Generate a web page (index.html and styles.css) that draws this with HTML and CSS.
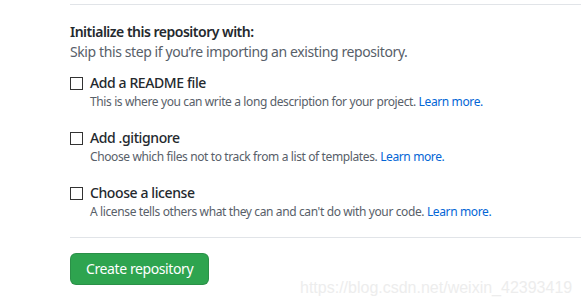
FILE: index.html
```html
<!DOCTYPE html>
<html lang="en">
<head>
    <meta charset="UTF-8">
    <meta name="viewport" content="width=device-width, initial-scale=1.0">
    <title>Create a new repository</title>
    <link rel="stylesheet" href="styles.css">
</head>
<body>
    <form class="repo-form">
        <div class="init-section">
            <h3>Initialize this repository with:</h3>
            <p class="note">Skip this step if you’re importing an existing repository.</p>

            <div class="option">
                <label class="option-label">
                    <input type="checkbox" name="readme"> Add a README file
                </label>
                <p class="option-desc">This is where you can write a long description for your project. <a href="#">Learn more.</a></p>
            </div>

            <div class="option">
                <label class="option-label">
                    <input type="checkbox" name="gitignore"> Add .gitignore
                </label>
                <p class="option-desc">Choose which files not to track from a list of templates. <a href="#">Learn more.</a></p>
            </div>

            <div class="option">
                <label class="option-label">
                    <input type="checkbox" name="license"> Choose a license
                </label>
                <p class="option-desc">A license tells others what they can and can't do with your code. <a href="#">Learn more.</a></p>
            </div>
        </div>

        <div class="form-actions">
            <button type="submit" class="btn-primary">Create repository</button>
        </div>
    </form>

    <div class="watermark">https://blog.csdn.net/weixin_42393419</div>
</body>
</html>
```

FILE: styles.css
```css
body {
    margin: 0;
    font-family: "Noto Sans", Arial, sans-serif;
    font-size: 14px;
    letter-spacing: -0.4px;
    color: #24292e;
    background: #fff;
}
.repo-form {
    margin: 4px 0 0 70px;
}
.init-section {
    border-top: 1px solid #e1e4e8;
    border-bottom: 1px solid #e1e4e8;
    padding: 17px 0 16px;
}
h3 {
    margin: 0;
    font-size: 14px;
    font-weight: 600;
    letter-spacing: -0.5px;
    line-height: 20px;
}
.note {
    margin: 0;
    color: #586069;
    line-height: 20px;
}
.option {
    margin-top: 11px;
}
.option + .option {
    margin-top: 17px;
}
.option-label {
    display: flex;
    align-items: center;
    gap: 7px;
    font-weight: 500;
    line-height: 20px;
}
.option-label input {
    appearance: none;
    width: 13px;
    height: 13px;
    margin: 0;
    border: 1px solid #333;
    background: #fff;
}
.option-desc {
    margin: 0 0 0 20px;
    font-size: 12px;
    letter-spacing: -0.38px;
    line-height: 18px;
    color: #586069;
}
.option-desc a {
    color: #0366d6;
    text-decoration: none;
}
.form-actions {
    padding-top: 15px;
}
.btn-primary {
    background-color: #2ea44f;
    color: #fff;
    font-family: inherit;
    font-size: 14px;
    letter-spacing: -0.4px;
    line-height: 20px;
    padding: 5px 15px;
    white-space: nowrap;
    border: 1px solid rgba(27, 31, 35, 0.15);
    border-radius: 6px;
    cursor: pointer;
}
.watermark {
    position: absolute;
    left: 300px;
    top: 279px;
    font-family: "Liberation Sans", Arial, sans-serif;
    font-size: 16px;
    letter-spacing: 0;
    color: #ededed;
}
```
